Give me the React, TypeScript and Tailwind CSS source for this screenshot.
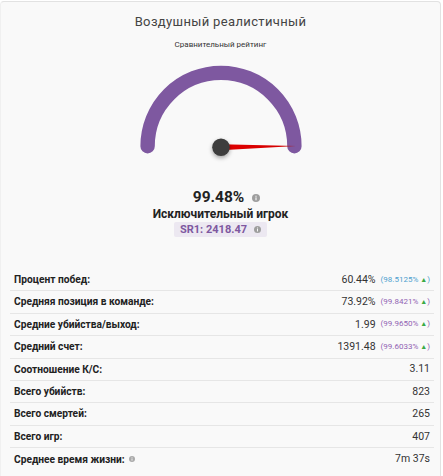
import React from "react";

const Info = ({ size = 8, color = "#9e9e9e" }: { size?: number; color?: string }) => (
  <svg width={size} height={size} viewBox="0 0 10 10" className="inline-block">
    <circle cx="5" cy="5" r="5" fill={color} />
    <rect x="4.3" y="4.2" width="1.4" height="3.6" fill="#f9f9f9" />
    <rect x="4.3" y="2.2" width="1.4" height="1.3" fill="#f9f9f9" />
  </svg>
);

type Row = { label: string; value: string; pct?: string; pctColor?: string; info?: boolean };

const rows: Row[] = [
  { label: "Процент побед:", value: "60.44%", pct: "98.5125%", pctColor: "#4d9fcf" },
  { label: "Средняя позиция в команде:", value: "73.92%", pct: "99.8421%", pctColor: "#9163b3" },
  { label: "Средние убийства/выход:", value: "1.99", pct: "99.9650%", pctColor: "#9163b3" },
  { label: "Средний счет:", value: "1391.48", pct: "99.6033%", pctColor: "#9163b3" },
  { label: "Соотношение К/С:", value: "3.11" },
  { label: "Всего убийств:", value: "823" },
  { label: "Всего смертей:", value: "265" },
  { label: "Всего игр:", value: "407" },
  { label: "Среднее время жизни:", value: "7m 37s", info: true },
];

function Gauge() {
  const cx = 90;
  const cy = 87.2;
  const r = 73.4;
  const frac = 0.9948;
  const ang = Math.PI * (1 - frac);
  const tipR = 75;
  const tx = cx + tipR * Math.cos(ang);
  const ty = cy - tipR * Math.sin(ang);
  const px = -Math.sin(ang);
  const py = -Math.cos(ang);
  const w = 3;
  return (
    <svg width="180" height="110" viewBox="0 0 180 110">
      <defs>
        <linearGradient id="needle" x1="0" y1="0" x2="1" y2="0">
          <stop offset="0" stopColor="#e10000" />
          <stop offset="0.8" stopColor="#d40000" />
          <stop offset="1" stopColor="#a01010" />
        </linearGradient>
        <filter id="sh" x="-1" y="-1" width="3" height="3">
          <feDropShadow dx="0" dy="2" stdDeviation="2" floodColor="#000" floodOpacity="0.35" />
        </filter>
      </defs>
      <path
        d={`M ${cx - r} ${cy - 1} A ${r} ${r} 0 0 1 ${cx + r} ${cy - 1}`}
        fill="none"
        stroke="#7e58a0"
        strokeWidth="14.4"
        strokeLinecap="round"
      />
      <polygon
        points={`${cx + px * w},${cy + py * w} ${tx},${ty} ${cx - px * w},${cy - py * w}`}
        fill="url(#needle)"
      />
      <circle cx={cx} cy={cy} r="8.8" fill="#3c3c3c" filter="url(#sh)" />
    </svg>
  );
}

export default function App() {
  return (
    <div className="w-[443px] h-[476px] bg-white overflow-hidden" style={{ fontFamily: "Roboto, 'Noto Sans', sans-serif" }}>
      <div className="mt-[1px] w-[441px] h-[480px] bg-[#f9f9f9] border border-[#e2e2e2] border-l-[#f0f0f0] rounded-[4px] flex flex-col items-center">
        <div className="mt-[10px] h-[20px] leading-[20px] text-[13px] tracking-[0.35px] text-[#444]">
          Воздушный реалистичный
        </div>
        <div className="mt-[6.5px] h-[12px] leading-[12px] text-[8px] text-[#333]">Сравнительный рейтинг</div>
        <div className="mt-[9.5px] h-[110px] flex justify-center">
          <Gauge />
        </div>
        <div className="mt-[18px] h-[19px] flex items-center gap-[8px] pl-[12px]">
          <span className="text-[15.5px] font-bold text-[#222] leading-[19px]">99.48%</span>
          <Info size={8} />
        </div>
        <div className="h-[14px] leading-[14px] text-[12px] font-bold text-[#222]">Исключительный игрок</div>
        <div className="mt-[1px] h-[15px] px-[6px] flex items-center gap-[7px] bg-[#ece8f1] rounded-[2px]">
          <span className="text-[11px] font-bold text-[#7e58a0] leading-[15px]">SR1: 2418.47</span>
          <Info size={7} />
        </div>
        <div className="mt-[32px] w-[424px] ml-[3px] flex flex-col">
          {rows.map((row, i) => (
            <div
              key={row.label}
              className={`h-[22.4px] flex items-center justify-between px-[4px] ${
                i < rows.length - 1 ? "border-b border-[#e6e6e6]" : ""
              }`}
            >
              <div className="flex items-center gap-[4px] text-[10.2px] font-bold text-[#222]">
                <span>{row.label}</span>
                {row.info && <Info size={6} color="#aaa" />}
              </div>
              <div className="flex items-center gap-[5px]">
                <span className="text-[10.5px] text-[#333]">{row.value}</span>
                {row.pct && (
                  <span className="text-[8px]" style={{ color: row.pctColor }}>
                    ({row.pct} <span className="text-[#3aaa45] text-[7px]">▲</span>)
                  </span>
                )}
              </div>
            </div>
          ))}
        </div>
      </div>
    </div>
  );
}
